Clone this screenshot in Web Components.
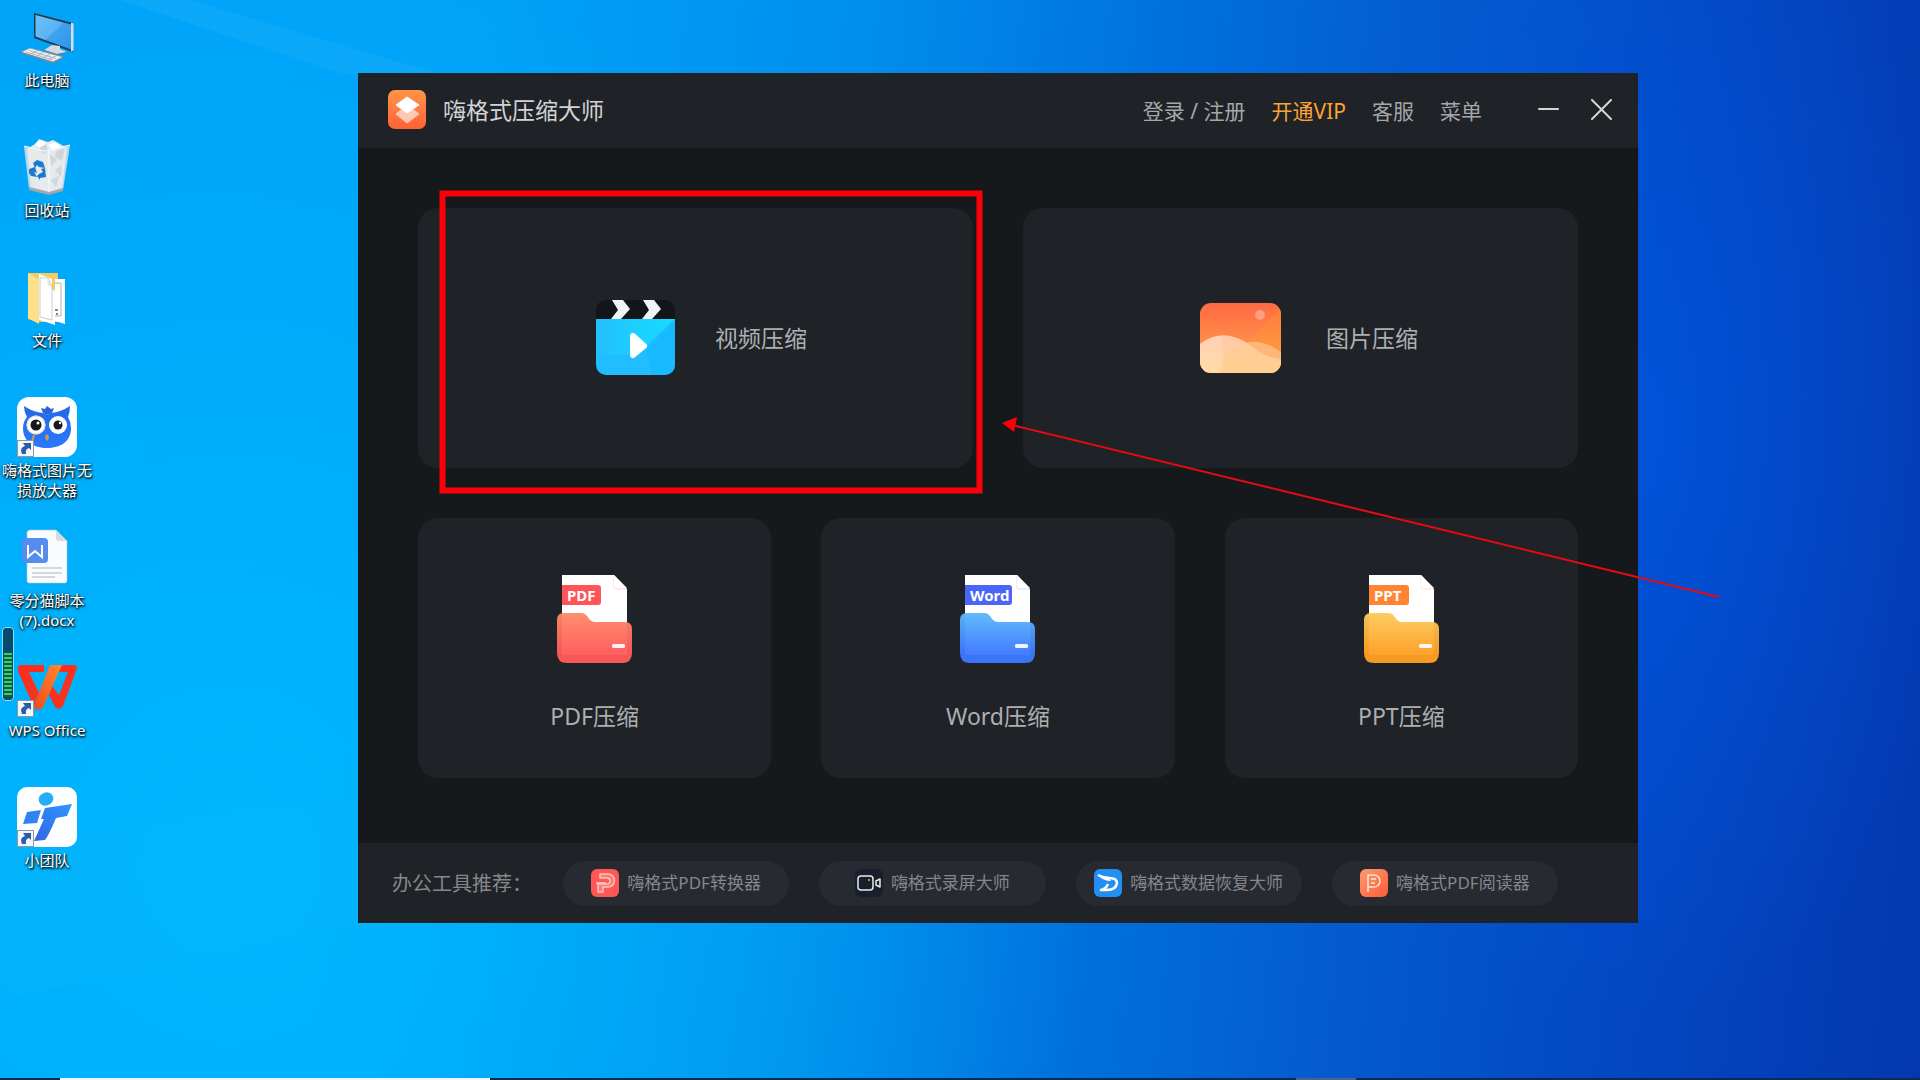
<!DOCTYPE html>
<html lang="zh-CN">
<head>
<meta charset="utf-8">
<title>嗨格式压缩大师</title>
<style>
  html, body {
    height: 100%;
    margin: 0;
    overflow: hidden;
  }

  body {
    font-family: 'Noto Sans', 'Noto Sans CJK SC', sans-serif;
  }
</style>
</head>
<body>
<desk-top>
  <desk-icon slot="icons" kind="computer" label="此电脑"></desk-icon>
  <desk-icon slot="icons" kind="bin" label="回收站"></desk-icon>
  <desk-icon slot="icons" kind="folder" label="文件"></desk-icon>
  <desk-icon slot="icons" kind="owl" label="嗨格式图片无损放大器" shortcut></desk-icon>
  <desk-icon slot="icons" kind="docx" label="零分猫脚本 (7).docx"></desk-icon>
  <desk-icon slot="icons" kind="wps" label="WPS Office" shortcut></desk-icon>
  <desk-icon slot="icons" kind="team" label="小团队" shortcut></desk-icon>

  <app-window heading="嗨格式压缩大师">
    <nav-link slot="nav" label="登录 / 注册"></nav-link>
    <nav-link slot="nav" label="开通VIP" vip></nav-link>
    <nav-link slot="nav" label="客服"></nav-link>
    <nav-link slot="nav" label="菜单"></nav-link>

    <wide-tile slot="wide" kind="video" label="视频压缩"></wide-tile>
    <wide-tile slot="wide" kind="image" label="图片压缩"></wide-tile>

    <file-tile slot="files" type="PDF" tag-width="39" from="#ff8a68" to="#ff5a5a" tag="#ff5558"></file-tile>
    <file-tile slot="files" type="Word" tag-width="47" from="#5cb8fc" to="#3d78ff" tag="#4a66f8"></file-tile>
    <file-tile slot="files" type="PPT" tag-width="40" from="#fbcb5c" to="#ff9f24" tag="#ff8534"></file-tile>

    <tool-link slot="tools" kind="convert" label="嗨格式PDF转换器"></tool-link>
    <tool-link slot="tools" kind="record" label="嗨格式录屏大师"></tool-link>
    <tool-link slot="tools" kind="recover" label="嗨格式数据恢复大师"></tool-link>
    <tool-link slot="tools" kind="reader" label="嗨格式PDF阅读器"></tool-link>
  </app-window>

  <level-meter slot="overlay"></level-meter>
  <mark-up slot="overlay"></mark-up>
</desk-top>

<script>
// Artwork for the desktop shortcuts, all on a 60x60 grid
const DESK_ART = {
  computer: `
    <defs>
      <linearGradient id="scr" x1="0" y1="0" x2="1" y2="1">
        <stop offset="0" stop-color="#6fc0fa"/><stop offset=".5" stop-color="#58b4f4"/>
        <stop offset=".51" stop-color="#40a2ee"/><stop offset="1" stop-color="#2a97ea"/>
      </linearGradient>
    </defs>
    <path d="M17 6 56 16V45L17 31Z" fill="#23394a"/>
    <path d="M54 15.500 56.500 16.500V43.500L54 44.500Z" fill="#d6dfe5"/>
    <path d="M18.500 8 54 17.500V42.500L18.500 29.500Z" fill="url(#scr)"/>
    <path d="M35 38 43 39V42L50 45 40 47 27 43Z" fill="#d4dce2"/>
    <path d="M27 43 40 47 50 45V46.500L40 48.500 27 44Z" fill="#69818f"/>
    <path d="M4 45 13 41 46 50 36 55Z" fill="#e9eef1" stroke="#7c909c" stroke-width=".7"/>
    <path d="M9 45 36 53M12 43.500 39 51.500M14 47 21 43M20 49 27 45M26 51 33 47M32 52 39 49" stroke="#9aabb6" stroke-width=".8" fill="none"/>
    <path d="M4 45V46.500L36 56.500V55ZM36 55V56.500L46 51.500V50Z" fill="#728793"/>`,
  bin: `
    <path d="M7 9 28 14 53 8 46 53 32 57 12 52Z" fill="#c9deeb" opacity=".9"/>
    <path d="M10 12 18 7 22 2 31 5 36 3 43 7 50 11 45 51 32 55 14 50Z" fill="#e6eaed"/>
    <path d="M18 7 24 3 29 7 22 11ZM31 8 39 5 43 9 36 14Z" fill="#fff"/>
    <path d="M22 11 29 7 31 14 27 17ZM39 14 48 11 45 24 38 20Z" fill="#cfd6da"/>
    <path d="M33 17 40 23 34 29ZM38 33 45 28 44 40ZM34 43 42 39 39 50Z" fill="#d0d6da"/>
    <path d="M7 9 28 14 53 8M32 14V56" fill="none" stroke="#f7fbfd" stroke-width="1"/>
    <path d="M12 50 32 55 46 51V54L32 58 12 53Z" fill="#a5a8ab"/>
    <g fill="#1c78d0">
      <path d="M16 26 20 23 26 25 28 31 22 30 20 28 18 31Z"/>
      <path d="M12 32 18 30 20 36 17 35 20 40 14 39 12 36Z"/>
      <path d="M22 37 26 35 24 32 28 31 29 40 23 41V43L20 39Z"/>
    </g>`,
  folder: `
    <path d="M11 6H41V55H20L11 52Z" fill="#f3cd63"/>
    <path d="M38 12H48V57L38 54Z" fill="#fff"/>
    <path d="M38 16H44V49H38" fill="none" stroke="#a8b0b5"/>
    <path d="M38 43H41M39 47H41" stroke="#596068" stroke-width="1.500"/>
    <path d="M22 7 35 12V22L38 24V58L20 52Z" fill="#fff"/>
    <path d="M23 11H31L35 19V53L23 50Z" fill="#fff" stroke="#b9bfc3" stroke-width=".8"/>
    <path d="M30 11 31 18 35 20Z" fill="#dfe3e5"/>
    <path d="M11 6 22 13V57L11 51Z" fill="#ffe08a"/>`,
  owl: `
    <defs>
      <linearGradient id="owl" x1="0" y1="0" x2="0" y2="1">
        <stop offset="0" stop-color="#2268e8"/><stop offset="1" stop-color="#2b78ff"/>
      </linearGradient>
    </defs>
    <rect width="60" height="60" rx="12" fill="#fff"/>
    <path d="M7 9Q16 15 26 16L30 18 34 16Q44 15 53 9Q53 15 51 20Q54 25 54 31C54 45 43 51 30 51S6 45 6 31Q6 25 10 20Q7 15 7 9Z" fill="url(#owl)"/>
    <path d="M24 11 28 12 30 9 34 12 37 11 35 16 30 18 26 16Z" fill="#2a64d2"/>
    <circle cx="19" cy="28" r="9.500" fill="#fff"/><circle cx="41" cy="28" r="9" fill="#fff"/>
    <circle cx="19" cy="28" r="9" fill="none" stroke="#e6d8c0" stroke-width="1"/>
    <circle cx="19" cy="28" r="5.500" fill="#16181c"/><circle cx="41" cy="28" r="4.500" fill="#16181c"/>
    <circle cx="21" cy="26" r="1.500" fill="#fff"/><circle cx="43" cy="26" r="1.200" fill="#fff"/>
    <path d="M17 38 14 48" stroke="#d0a04c" stroke-width="2"/>
    <path d="M30 37Q34 40 30 44Q26 40 30 37Z" fill="#c79a56"/>`,
  docx: `
    <path d="M13 3H39L50 14V54Q50 56 48 56H12Q10 56 10 54V6Q10 3 13 3Z" fill="#fafbfc" stroke="#b6c2cb" stroke-width=".6"/>
    <path d="M39 3V11Q39 14 42 14H50Z" fill="#d5dce3"/>
    <rect x="5" y="11" width="26" height="25" rx="4" fill="#568bf0"/>
    <path d="M11 18V30L18 24 25 30V18" fill="none" stroke="#fff" stroke-width="2"/>
    <path d="M15 41H45M15 46H45M15 50H38" stroke="#c8ced4" stroke-width="1.500"/>`,
  wps: `
    <defs>
      <linearGradient id="wa" x1="0" y1="0" x2="1" y2="1">
        <stop offset="0" stop-color="#ff2a20"/><stop offset="1" stop-color="#f03a1c"/>
      </linearGradient>
      <linearGradient id="wb" x1="1" y1="0" x2="0" y2="1">
        <stop offset="0" stop-color="#ff8a2c"/><stop offset="1" stop-color="#f4491d"/>
      </linearGradient>
    </defs>
    <path d="M4 8H27V15H12L22 36 17 48Q14 44 12 39L1 14Q0 8 4 8Z" fill="url(#wa)"/>
    <path d="M40 8H56Q62 8 59 14L46 49Q43 54 38 50L32 38 35 29 42 38 51 15H40Z" fill="url(#wa)"/>
    <path d="M33 8H45L27 48Q25 54 18 52L17 48Z" fill="url(#wb)"/>`,
  team: `
    <defs>
      <linearGradient id="tm" x1="0" y1="1" x2="1" y2="0">
        <stop offset="0" stop-color="#3166e2"/><stop offset="1" stop-color="#2e96ff"/>
      </linearGradient>
    </defs>
    <rect width="60" height="60" rx="10" fill="#fff"/>
    <ellipse cx="29" cy="12" rx="7.500" ry="6.500" fill="#25aef8" transform="rotate(-20 29 12)"/>
    <path d="M10 25 24 23 20 36 6 37Z" fill="#2f83f2"/>
    <path d="M28 21 55 17 50 29 39 31Q32 48 28 53L17 54 27 32 24 32Z" fill="url(#tm)"/>`
};

const WIDE_ART = {
  video: `
    <svg width="91" height="75" viewBox="-12 0 91 75">
      <defs>
        <clipPath id="c"><rect width="79" height="75" rx="10"/></clipPath>
        <linearGradient id="v" x1="0" y1="0" x2="1" y2="0">
          <stop offset="0" stop-color="#22c0ff"/><stop offset="1" stop-color="#18dcff"/>
        </linearGradient>
      </defs>
      <g clip-path="url(#c)">
        <path d="M0 0H79V20H0Z" fill="#12161a"/>
        <path d="M0 19H79V75H0Z" fill="#20bdff"/>
        <path d="M0 19H79L40 55H0Z" fill="url(#v)"/>
        <path d="M79 20V75H56L50 50Z" fill="#14b9ff" opacity=".7"/>
      </g>
      <path d="M16 0H27L34 9 25 19H15L22 10ZM47 0H58L65 9 56 19H46L53 10Z" fill="#f1f4f6"/>
      <path d="M37 36 48 46 37 55Z" fill="#fff" stroke="#fff" stroke-width="6" stroke-linejoin="round"/>
    </svg>`,
  image: `
    <svg width="103" height="70" viewBox="-17 0 103 70">
      <defs>
        <clipPath id="c"><rect width="81" height="70" rx="11"/></clipPath>
        <linearGradient id="s" x1="0" y1="0" x2="0" y2="1">
          <stop offset="0" stop-color="#ff6a42"/><stop offset="1" stop-color="#ffa850"/>
        </linearGradient>
        <linearGradient id="h" x1="0" y1="0" x2="0" y2="1">
          <stop offset="0" stop-color="#ffc8ab"/><stop offset="1" stop-color="#ffd795"/>
        </linearGradient>
      </defs>
      <g clip-path="url(#c)">
        <path d="M0 0H81V70H0Z" fill="url(#s)"/>
        <path d="M81 5 48 38 81 60Z" fill="#ff9a2c" opacity=".3"/>
        <path d="M24 50Q52 28 81 49V70H20Z" fill="#ffb679"/>
        <path d="M0 41Q22 24 47 40C59 49 67 55 81 56V70H0Z" fill="url(#h)"/>
        <path d="M0 41Q10 32 22 33Q21 51 26 60L19 70H0Z" fill="#fff" opacity=".15"/>
        <path d="M22 54Q34 42 50 42C60 49 67 55 81 56V70H20Z" fill="#ffc889" opacity=".45"/>
        <circle cx="60" cy="12" r="5" fill="#ff9d80"/>
      </g>
    </svg>`
};

const TOOL_ART = {
  convert: `
    <rect width="28" height="28" rx="6" fill="#ff5656"/>
    <path d="M9 5H17A6.500 6.500 0 0 1 17 18H12V23H7V15H16A2.500 2.500 0 0 0 16 9H9Z" fill="#ff7a72" stroke="#ffc4be" stroke-width="1.500" stroke-linejoin="round"/>
    <path d="M5 14H15" stroke="#ffd5cf" stroke-width="1.500"/>`,
  record: `
    <rect width="28" height="28" rx="6" fill="#191f2d"/>
    <rect x="3" y="7" width="15" height="14" rx="3" fill="none" stroke="#e8eaec" stroke-width="1.500"/>
    <path d="M21 12 25 10V18L21 16Z" fill="none" stroke="#e8eaec" stroke-width="1.500" stroke-linejoin="round"/>
    <circle cx="14" cy="11" r="1" fill="#ffa43a"/>`,
  recover: `
    <rect width="28" height="28" rx="6" fill="#238ff0"/>
    <path d="M4 6Q10 9 15 9Q23 9 23 14Q22 21 13 21H7Q12 20 14 15" fill="none" stroke="#fff" stroke-width="2.500" stroke-linejoin="round"/>
    <path d="M4 6Q9 12 17 12L15 8Z" fill="#fff"/>`,
  reader: `
    <defs>
      <linearGradient id="r" x1="0" y1="0" x2="1" y2="1">
        <stop offset="0" stop-color="#ff9b6c"/><stop offset="1" stop-color="#ff5a38"/>
      </linearGradient>
    </defs>
    <rect width="28" height="28" rx="6" fill="url(#r)"/>
    <path d="M8 23V6H14A6 6 0 0 1 14 18H8M11 10H16M11 14H15" fill="none" stroke="#ffe6dc" stroke-width="1.500"/>`
};

function shadow(el, html) {
  el.attachShadow({ mode: 'open' }).innerHTML = html;
}

class DeskTop extends HTMLElement {
  constructor() {
    super();
    shadow(this, `
      <style>
        :host {
          display: flex;
          flex-direction: column;
          position: relative;
          height: 100vh;
          overflow: hidden;
          background:
            radial-gradient(ellipse 18% 55% at 85% 40%, rgba(0, 92, 236, 0.5), rgba(0, 92, 236, 0) 100%),
            radial-gradient(ellipse 45% 85% at 12% 80%, rgba(0, 190, 255, 0.75), rgba(0, 180, 255, 0) 100%),
            linear-gradient(96deg, #00a3f9 0%, #00a2f8 24%, #008fee 42%, #0070de 58%, #0459ce 72%, #0348c4 84%, #0338b0 100%);
        }

        .beams {
          position: absolute;
          width: 100%;
          height: 100%;
        }

        .icons {
          display: flex;
          flex-direction: column;
          position: relative;
          width: 94px;
          flex: 1;
        }

        .taskbar {
          display: flex;
          position: relative;
          height: 2px;
          background: #0c2c48;
        }

        .search {
          width: 22.4%;
          margin-left: 60px;
          background: #f2f5f7;
        }

        .task {
          width: 60px;
          margin-left: 42%;
          background: #4d6480;
        }
      </style>
      <svg class="beams" viewBox="0 0 1920 1080" preserveAspectRatio="none" aria-hidden="true">
        <path d="M190 0 460 80 340 73 120 0Z" fill="#5cc8ff" opacity=".12"/>
        <path d="M0 842 358 800V923L0 1000Z" fill="#20c4ff" opacity=".08"/>
      </svg>
      <div class="icons"><slot name="icons"></slot></div>
      <slot></slot>
      <slot name="overlay"></slot>
      <div class="taskbar"><div class="search"></div><div class="task"></div></div>
    `);
  }
}

class DeskIcon extends HTMLElement {
  connectedCallback() {
    const arrow = `
      <rect x="0.500" y="43.500" width="16" height="16" fill="#f4f6f8" stroke="#8c98a4"/>
      <path d="M5 57Q2 51 8 49L6 46H14V53L12 51Q8 52 9 57Z" fill="#2a5ea8"/>`;
    shadow(this, `
      <style>
        :host {
          display: block;
          height: 123px;
          padding-top: 7px;
        }

        a {
          display: flex;
          flex-direction: column;
          align-items: center;
          gap: 3px;
          color: #fff;
          text-decoration: none;
        }

        span {
          max-width: 94px;
          font-size: 15px;
          line-height: 20px;
          text-align: center;
          text-shadow: 1px 1px 2px #000, 0 1px 3px #000;
        }
      </style>
      <a href="#">
        <svg width="60" height="60" viewBox="0 0 60 60" aria-hidden="true">
          ${DESK_ART[this.getAttribute('kind')]}
          ${this.hasAttribute('shortcut') ? arrow : ''}
        </svg>
        <span>${this.getAttribute('label')}</span>
      </a>
    `);
  }
}

class AppWindow extends HTMLElement {
  connectedCallback() {
    shadow(this, `
      <style>
        :host {
          display: block;
          position: absolute;
          top: 73px;
          left: 358px;
          width: 66.667%;
          background: #16191c;
          color: #adafb1;
        }

        header,
        footer {
          display: flex;
          align-items: center;
          box-sizing: border-box;
          background: #1f2226;
        }

        header {
          height: 75px;
          padding: 0 26px 2px 30px;
        }

        h1 {
          flex: 1;
          margin: 0 0 0 17px;
          color: #d2d3d4;
          font-size: 23px;
          font-weight: 400;
          line-height: 32px;
        }

        nav {
          display: flex;
          gap: 26px;
          margin-right: 56px;
          padding-top: 2px;
        }

        .controls {
          display: flex;
          gap: 32px;
        }

        button {
          display: block;
          padding: 0;
          border: 0;
          background: none;
        }

        button svg {
          display: block;
        }

        main {
          display: grid;
          gap: 50px;
          padding: 60px 60px 65px;
        }

        .row {
          display: grid;
          grid-auto-flow: column;
          grid-auto-columns: 1fr;
          gap: 50px;
        }

        footer {
          height: 80px;
          padding: 0 80px 0 34px;
          color: #85878a;
        }

        p {
          width: 171px;
          margin: 0;
          padding-top: 2px;
          font-size: 20px;
          line-height: 28px;
          white-space: nowrap;
        }

        .tools {
          display: grid;
          flex: 1;
          grid-auto-flow: column;
          grid-auto-columns: 1fr;
          gap: 30px;
        }
      </style>
      <header>
        <svg width="38" height="39" viewBox="0 0 38 39" aria-hidden="true">
          <defs>
            <linearGradient id="g" x1="0" y1="0" x2="0" y2="1">
              <stop offset="0" stop-color="#ff9448"/><stop offset="1" stop-color="#ff6236"/>
            </linearGradient>
          </defs>
          <rect width="38" height="39" rx="7" fill="url(#g)"/>
          <path d="M8 24 13 20H26L31 24 19 33Z" fill="#ffc8b4" stroke="#ffc8b4" stroke-linejoin="round"/>
          <path d="M8 15 19 7 31 15 19 23Z" fill="#fff" stroke="#fff" stroke-linejoin="round"/>
        </svg>
        <h1>${this.getAttribute('heading')}</h1>
        <nav><slot name="nav"></slot></nav>
        <div class="controls">
          <button type="button" aria-label="最小化">
            <svg width="21" height="21" viewBox="0 0 21 21"><path d="M1 10H20" stroke="#d4d5d6" stroke-width="2" stroke-linecap="round"/></svg>
          </button>
          <button type="button" aria-label="关闭">
            <svg width="21" height="21" viewBox="0 0 21 21"><path d="M1 1 20 20M20 1 1 20" stroke="#d4d5d6" stroke-width="2" stroke-linecap="round"/></svg>
          </button>
        </div>
      </header>
      <main>
        <div class="row"><slot name="wide"></slot></div>
        <div class="row"><slot name="files"></slot></div>
      </main>
      <footer>
        <p>办公工具推荐：</p>
        <div class="tools"><slot name="tools"></slot></div>
      </footer>
    `);
  }
}

class NavLink extends HTMLElement {
  connectedCallback() {
    shadow(this, `
      <style>
        :host {
          display: block;
        }

        a {
          color: #a5a7a9;
          font-size: 21px;
          line-height: 28px;
          text-decoration: none;
          white-space: nowrap;
        }

        :host([vip]) a {
          color: #fca334;
        }
      </style>
      <a href="#">${this.getAttribute('label')}</a>
    `);
  }
}

// Styles shared by both kinds of tile
const TILE_CSS = `
  :host {
    display: block;
    min-width: 0;
  }

  button {
    display: flex;
    align-items: center;
    box-sizing: border-box;
    width: 100%;
    height: 260px;
    padding: 0;
    border: 0;
    border-radius: 20px;
    background: #1f2226;
    color: #adafb1;
    font: inherit;
    font-size: 23px;
    line-height: 32px;
  }
`;

class WideTile extends HTMLElement {
  connectedCallback() {
    shadow(this, `
      <style>
        ${TILE_CSS}
        button {
          justify-content: center;
          gap: 40px;
          padding-bottom: 1px;
        }
      </style>
      <button type="button">
        ${WIDE_ART[this.getAttribute('kind')]}
        <span>${this.getAttribute('label')}</span>
      </button>
    `);
  }
}

class FileTile extends HTMLElement {
  connectedCallback() {
    const type = this.getAttribute('type');
    const tag = this.getAttribute('tag');
    const right = 5 + Number(this.getAttribute('tag-width'));
    shadow(this, `
      <style>
        ${TILE_CSS}
        button {
          flex-direction: column;
          gap: 37px;
          padding-top: 57px;
        }

        text {
          font-size: 15px;
          font-weight: 700;
        }
      </style>
      <button type="button">
        <svg width="75" height="88" viewBox="0 0 75 88">
          <defs>
            <linearGradient id="f" x1="0" y1="0" x2="0" y2="1">
              <stop offset="0" stop-color="${this.getAttribute('from')}"/>
              <stop offset=".8" stop-color="${this.getAttribute('to')}"/>
            </linearGradient>
          </defs>
          <path d="M5 0H57L70 14V80H5Z" fill="#fff"/>
          <path d="M56 0V11Q56 15 60 15H70" fill="${tag}" opacity=".12"/>
          <path d="M57 0 70 13H60Q57 13 57 10Z" fill="#fff"/>
          <path d="M5 10H${right - 3}Q${right} 10 ${right} 13V27Q${right} 30 ${right - 3} 30H5Z" fill="${tag}"/>
          <text x="10" y="26" fill="#fff">${type}</text>
          <path d="M7 38H25Q28 38 30 41L33 45Q35 47 38 47H68Q75 47 75 54V78Q75 88 65 88H10Q0 88 0 78V45Q0 38 7 38Z" fill="url(#f)" opacity=".96"/>
          <rect x="55" y="69" width="13" height="4" rx="1.500" fill="#fff" opacity=".9"/>
        </svg>
        <span>${type}压缩</span>
      </button>
    `);
  }
}

class ToolLink extends HTMLElement {
  connectedCallback() {
    shadow(this, `
      <style>
        :host {
          display: block;
          min-width: 0;
        }

        a {
          display: flex;
          align-items: center;
          justify-content: center;
          gap: 8px;
          height: 45px;
          border-radius: 23px;
          background: #282a31;
          color: #85878a;
          font-size: 17px;
          line-height: 24px;
          text-decoration: none;
          white-space: nowrap;
        }
      </style>
      <a href="#">
        <svg width="28" height="28" viewBox="0 0 28 28" aria-hidden="true">${TOOL_ART[this.getAttribute('kind')]}</svg>
        ${this.getAttribute('label')}
      </a>
    `);
  }
}

// Narrow level gauge docked to the left screen edge
class LevelMeter extends HTMLElement {
  constructor() {
    super();
    shadow(this, `
      <style>
        :host {
          position: absolute;
          top: 627px;
          left: 2px;
          box-sizing: border-box;
          width: 12px;
          height: 74px;
          padding: 25px 1px 3px;
          border: 1px solid #8fdcf5;
          border-radius: 4px;
          background: #064a6c;
        }

        div {
          height: 100%;
          background: repeating-linear-gradient(#3fd05e 0 2px, #0a5c50 2px 4px);
        }
      </style>
      <div></div>
    `);
  }
}

// Red frame and arrow drawn over the desktop
class MarkUp extends HTMLElement {
  constructor() {
    super();
    shadow(this, `
      <style>
        :host {
          position: absolute;
          top: 0;
          left: 0;
          width: 100%;
          height: 100%;
          pointer-events: none;
        }
      </style>
      <svg width="100%" height="100%" viewBox="0 0 1920 1080" aria-hidden="true">
        <rect x="442.500" y="193.500" width="537" height="297" fill="none" stroke="#fb0007" stroke-width="6"/>
        <path d="M1719 597 1012 425" stroke="#e80a10" stroke-width="2"/>
        <path d="M1002 423 1017 417 1014 432Z" fill="#fb0007"/>
      </svg>
    `);
  }
}

customElements.define('desk-top', DeskTop);
customElements.define('desk-icon', DeskIcon);
customElements.define('app-window', AppWindow);
customElements.define('nav-link', NavLink);
customElements.define('wide-tile', WideTile);
customElements.define('file-tile', FileTile);
customElements.define('tool-link', ToolLink);
customElements.define('level-meter', LevelMeter);
customElements.define('mark-up', MarkUp);
</script>
</body>
</html>
